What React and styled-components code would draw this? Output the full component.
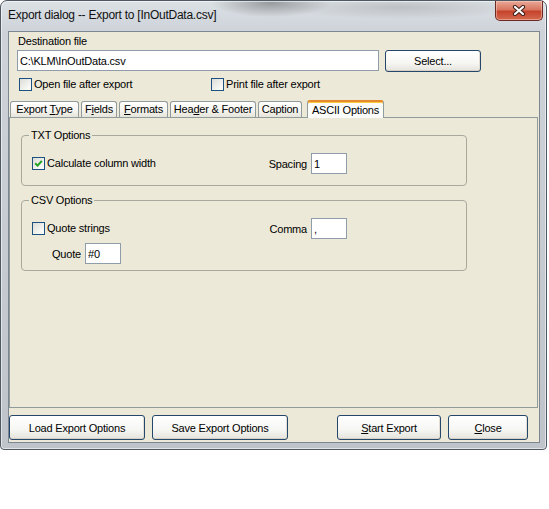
import React from 'react'
import styled, { createGlobalStyle, css } from 'styled-components'

const GlobalStyle = createGlobalStyle`
  html, body {
    margin: 0;
    padding: 0;
    background: #fff;
  }
  body {
    font-family: "Liberation Sans", Arial, sans-serif;
    font-size: 11px;
    letter-spacing: -0.2px;
    color: #000;
  }
  * {
    box-sizing: border-box;
  }
`

const Window = styled.div`
  width: 547px;
  height: 450px;
  display: flex;
  flex-direction: column;
  border: 1px solid #4f5964;
  border-radius: 7px 7px 4px 4px;
  background:
    radial-gradient(ellipse 60px 14px at 270px 2px, rgba(50, 50, 50, 0.4), transparent),
    radial-gradient(ellipse 120px 12px at 400px 6px, rgba(90, 90, 90, 0.22), transparent),
    linear-gradient(180deg, #dce1e6 0%, #cdd3d9 30px, #bec4ca 100%);
  box-shadow: inset 0 0 0 1px rgba(255, 255, 255, 0.55);
`

const TitleBar = styled.div`
  height: 30px;
  display: flex;
  justify-content: space-between;
  align-items: flex-start;
  padding: 0 3px 0 7px;
`

const Title = styled.div`
  font-size: 12px;
  letter-spacing: -0.25px;
  line-height: 29px;
  color: #111;
`

const CloseButton = styled.div`
  width: 48px;
  height: 20px;
  display: flex;
  align-items: center;
  justify-content: center;
  border: 1px solid #6b2b22;
  border-top: none;
  border-radius: 0 0 5px 5px;
  background: linear-gradient(180deg, #e9a999 0%, #d9765f 45%, #c5442c 55%, #d4694f 100%);
  box-shadow: inset 0 0 0 1px rgba(255, 220, 210, 0.45);
`

const Client = styled.div`
  flex: 1;
  margin: 0 6px 6px 7px;
  border: 1px solid #7d8791;
  background: #ece9d8;
  display: flex;
  flex-direction: column;
  padding-bottom: 2px;
`

const TopSection = styled.div`
  padding: 3px 0 0 8px;
  display: flex;
  flex-direction: column;
`

const FieldLabel = styled.div`
  line-height: 13px;
  margin-left: 1px;
`

const FileRow = styled.div`
  display: flex;
  gap: 6px;
  margin-top: 2px;
`

const TextInput = styled.input`
  width: ${(p) => p.$w}px;
  height: 21px;
  border: 1px solid #8f9daa;
  background: #fff;
  font-family: inherit;
  font-size: 11px;
  letter-spacing: inherit;
  padding: 0 2px;
  margin: 0;
  color: #000;
  outline: none;
`

const Button = styled.button`
  width: ${(p) => p.$w}px;
  height: ${(p) => p.$h || 25}px;
  border: 1px solid #24476b;
  border-radius: 3px;
  background: linear-gradient(180deg, #ffffff 0%, #f6f6f3 60%, #e4e3dc 100%);
  box-shadow: inset 0 -1px 0 #d6d0c5, inset -1px 0 0 #e2ded4;
  font-family: inherit;
  font-size: 11px;
  letter-spacing: inherit;
  color: #000;
  padding: 0;
  margin: 0;
`

const CheckRow = styled.div`
  display: grid;
  grid-template-columns: 192px auto;
  margin-top: 6px;
  padding-left: 2px;
`

const CheckItem = styled.label`
  display: flex;
  align-items: center;
  gap: 2px;
  line-height: 13px;
`

const Box = styled.span`
  width: 13px;
  height: 13px;
  border: 1px solid #1c5180;
  background: linear-gradient(135deg, #dcdcd7 0%, #f5f5f2 70%, #ffffff 100%);
  display: flex;
  align-items: center;
  justify-content: center;
`

const Acc = styled.span`
  text-decoration: underline;
`

const TabStrip = styled.div`
  display: flex;
  align-items: flex-end;
  height: 17px;
  margin: 9px 1px 0 0;
  padding-left: 1px;
  gap: 2px;
  position: relative;
  z-index: 1;
`

const Tab = styled.div`
  width: ${(p) => p.$w}px;
  height: 16px;
  line-height: 15px;
  text-align: center;
  white-space: nowrap;
  border: 1px solid #919b9c;
  border-bottom: none;
  border-radius: 3px 3px 0 0;
  background: linear-gradient(180deg, #ffffff 0%, #f4f3ee 60%, #e6e4da 100%);
  ${(p) =>
    p.$active &&
    css`
      height: 18px;
      line-height: 16px;
      margin: 0 0 -1px 3px;
      border-top: 2px solid #e68b2c;
      box-shadow: inset 0 1px 0 #ffc83c;
      background: #fcfcfa;
    `}
`

const TabPanel = styled.div`
  flex: 1;
  margin-right: 1px;
  border: 1px solid #919b9c;
  background: #ece9d8;
  padding: 11px 0 0 11px;
  display: flex;
  flex-direction: column;
  gap: 8px;
`

const Group = styled.fieldset`
  width: 446px;
  margin: 0;
  padding: 11px 10px ${(p) => p.$pb}px;
  border: 1px solid #a9a89c;
  border-radius: 4px;
  min-width: 0;
`

const Legend = styled.legend`
  padding: 0 2px;
  margin-left: -3px;
  line-height: 13px;
`

const GroupGrid = styled.div`
  display: grid;
  grid-template-columns: 231px 40px 36px;
  column-gap: 4px;
  row-gap: 4px;
  align-items: center;
`

const SideLabel = styled.div`
  text-align: right;
`

const InlineField = styled.div`
  display: flex;
  align-items: center;
  gap: 4px;
  padding-left: 20px;
`

const ButtonBar = styled.div`
  display: flex;
  gap: 7px;
  margin-top: 7px;
  padding-right: 11px;
`

const Spacer = styled.div`
  flex: 1;
`

const CloseGlyph = () => (
  <svg width="14" height="11" viewBox="0 0 14 11">
    <path d="M3 2 L11 9 M11 2 L3 9" stroke="#3b1f1a" strokeWidth="4.2" strokeLinecap="round" />
    <path d="M3 2 L11 9 M11 2 L3 9" stroke="#ffffff" strokeWidth="2.2" strokeLinecap="round" />
  </svg>
)

const Check = ({ checked, children }) => (
  <CheckItem>
    <Box>
      {checked && (
        <svg width="9" height="9" viewBox="0 0 9 9">
          <path d="M1.2 4.2 L3.6 6.6 L7.8 1.8" fill="none" stroke="#21a121" strokeWidth="2" />
        </svg>
      )}
    </Box>
    <span>{children}</span>
  </CheckItem>
)

const tabs = [
  { w: 69, label: <>Export <Acc>T</Acc>ype</> },
  { w: 36, label: <>F<Acc>i</Acc>elds</> },
  { w: 49, label: <><Acc>F</Acc>ormats</> },
  { w: 86, label: <>Hea<Acc>d</Acc>er &amp; Footer</> },
  { w: 44, label: <>Caption</> },
  { w: 77, label: <>ASCII Options</>, active: true },
]

export default function App() {
  return (
    <>
      <GlobalStyle />
      <Window>
        <TitleBar>
          <Title>Export dialog -- Export to [InOutData.csv]</Title>
          <CloseButton>
            <CloseGlyph />
          </CloseButton>
        </TitleBar>
        <Client>
          <TopSection>
            <FieldLabel>Destination file</FieldLabel>
            <FileRow>
              <TextInput $w={362} readOnly defaultValue="C:\KLM\InOutData.csv" />
              <Button $w={96} $h={22}>Select...</Button>
            </FileRow>
            <CheckRow>
              <Check>Open file after export</Check>
              <Check>Print file after export</Check>
            </CheckRow>
          </TopSection>

          <TabStrip>
            {tabs.map((t, i) => (
              <Tab key={i} $w={t.w} $active={t.active}>
                {t.label}
              </Tab>
            ))}
          </TabStrip>
          <TabPanel>
            <Group $pb={11}>
              <Legend>TXT Options</Legend>
              <GroupGrid>
                <Check checked>Calculate column width</Check>
                <SideLabel>Spacing</SideLabel>
                <TextInput $w={36} readOnly defaultValue="1" />
              </GroupGrid>
            </Group>
            <Group $pb={6}>
              <Legend>CSV Options</Legend>
              <GroupGrid>
                <Check>Quote strings</Check>
                <SideLabel>Comma</SideLabel>
                <TextInput $w={36} readOnly defaultValue="," />
                <InlineField>
                  <span>Quote</span>
                  <TextInput $w={36} readOnly defaultValue="#0" />
                </InlineField>
              </GroupGrid>
            </Group>
          </TabPanel>

          <ButtonBar>
            <Button $w={136}>Load Export Options</Button>
            <Button $w={136}>Save Export Options</Button>
            <Spacer />
            <Button $w={104}>
              <Acc>S</Acc>tart Export
            </Button>
            <Button $w={80}>
              <Acc>C</Acc>lose
            </Button>
          </ButtonBar>
        </Client>
      </Window>
    </>
  )
}
